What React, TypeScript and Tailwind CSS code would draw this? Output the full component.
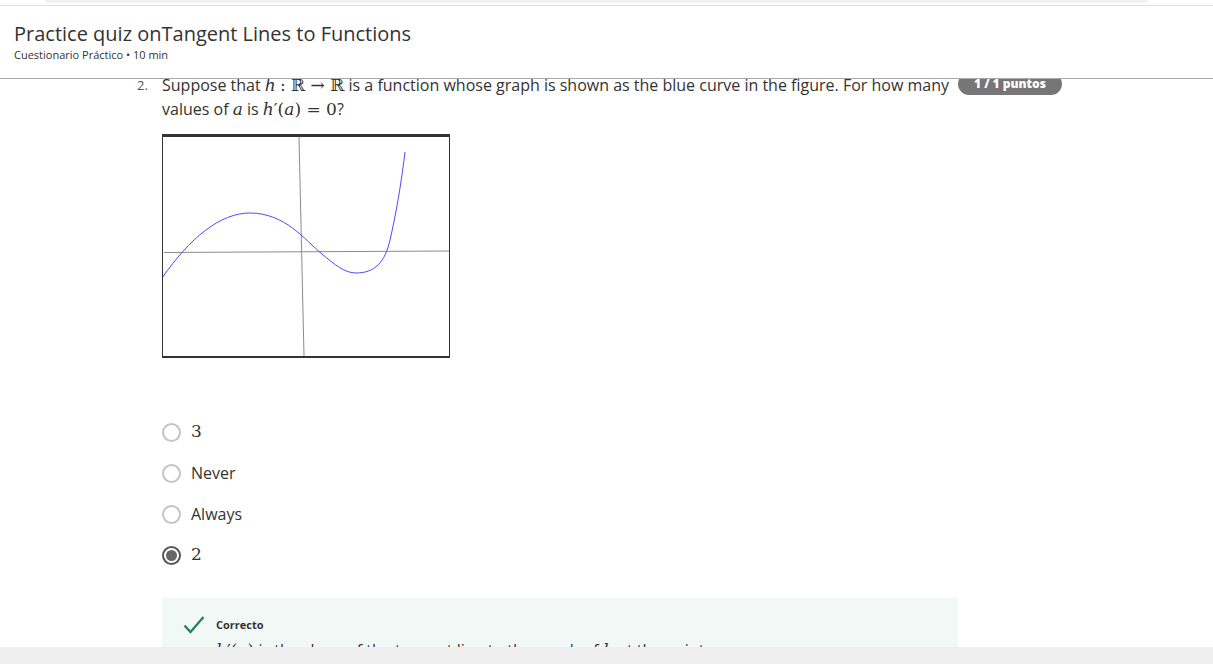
import React from "react";

const options = [
  { label: "3", math: true, checked: false },
  { label: "Never", math: false, checked: false },
  { label: "Always", math: false, checked: false },
  { label: "2", math: true, checked: true },
];

function M({ children, italic = true }: { children: React.ReactNode; italic?: boolean }) {
  return (
    <span className={`font-['DejaVu_Serif',serif] text-[17px] ${italic ? "italic" : ""}`}>
      {children}
    </span>
  );
}

function Graph() {
  return (
    <div className="w-[288px] h-[224px] border-x border-t-[3px] border-b-2 border-[#333] bg-white">
      <svg width="286" height="219" viewBox="163 137 286 219" className="block">
        <line x1="299" y1="137" x2="304" y2="356" stroke="#8a8a8a" strokeWidth="1" />
        <line x1="164" y1="252.5" x2="449" y2="251" stroke="#8a8a8a" strokeWidth="1" />
        <path
          d="M162,278 C190,238 220,213 250,213 C285,213 305,240 322,254 C335,265 345,273 356,273 C375,273 385,262 390,240 C396,214 401,185 405,152"
          fill="none"
          stroke="#4a4aff"
          strokeWidth="1"
        />
      </svg>
    </div>
  );
}

export default function App() {
  return (
    <div className="w-[1213px] h-[664px] bg-white overflow-hidden flex flex-col font-['Open_Sans',sans-serif] text-[#333]">
      {/* top strip */}
      <div className="h-[6px] shrink-0 border-b border-[#dedede]">
        <div className="mx-[45px] w-[1103px] h-[3px] bg-[#f1f1f1] rounded-b-full" />
      </div>

      {/* header */}
      <header className="relative z-10 shrink-0 h-[73px] bg-white border-b border-[#a8a8a8] px-[14px] pt-[15px]">
        <h1 className="text-[20px] leading-[26px] text-[#333]">Practice quiz onTangent Lines to Functions</h1>
        <p className="text-[11px] leading-[14px] mt-[1px] text-[#333]">Cuestionario Práctico • 10 min</p>
      </header>

      {/* scrolled content */}
      <main className="flex-1 overflow-hidden">
        <div className="-mt-[6px] pl-[137px]">
          <div className="flex">
            <span className="w-[25px] text-[13px] leading-[24px] text-[#555]">2.</span>
            <div className="w-[796px]">
              <p className="text-[16px] leading-[24px] text-[#333]">
                Suppose that <M>h</M> <M italic={false}>: ℝ → ℝ</M> is a function whose graph is shown as the blue curve in the figure. For how many values of <M>a</M> is <M>h</M><M italic={false}>′(</M><M>a</M><M italic={false}>) = 0</M>?
              </p>
              <div className="mt-[13px]">
                <Graph />
              </div>

              <div className="mt-[62px] flex flex-col gap-[17px]">
                {options.map((o) => (
                  <label key={o.label} className="flex items-center h-[24px]">
                    <span
                      className={`w-[19px] h-[19px] rounded-full border-2 flex items-center justify-center ${
                        o.checked ? "border-[#555]" : "border-[#c4c4c4]"
                      }`}
                    >
                      {o.checked && <span className="w-[11px] h-[11px] rounded-full bg-[#666]" />}
                    </span>
                    <span className="ml-[10px] text-[16px] text-[#333]">
                      {o.math ? <M italic={false}>{o.label}</M> : o.label}
                    </span>
                  </label>
                ))}
              </div>

              <div className="mt-[31px] bg-[#f2f8f6] pt-[17px] pl-[21px] pb-[20px]">
                <div className="flex items-center">
                  <svg width="22" height="20" viewBox="0 0 22 20" className="shrink-0">
                    <path d="M1.5 10.5 L7.5 17 L20.5 2" fill="none" stroke="#1f8354" strokeWidth="2.2" />
                  </svg>
                  <span className="ml-[11px] text-[11px] font-bold text-[#333]">Correcto</span>
                </div>
                <p className="ml-[33px] mt-[4px] text-[16px] leading-[22px] text-[#333]">
                  <M>h</M><M italic={false}>′(</M><M>a</M><M italic={false}>)</M> is the slope of the tangent line to the graph of <M>h</M> at the point
                </p>
              </div>
            </div>
            <div className="shrink-0 h-[22px] w-[104px] rounded-full bg-[#767676] text-white text-[12px] font-extrabold flex items-center justify-center">
              1 / 1 puntos
            </div>
          </div>
        </div>
      </main>

      {/* bottom bar */}
      <div className="h-[17px] shrink-0 bg-[#efefef]" />
    </div>
  );
}
